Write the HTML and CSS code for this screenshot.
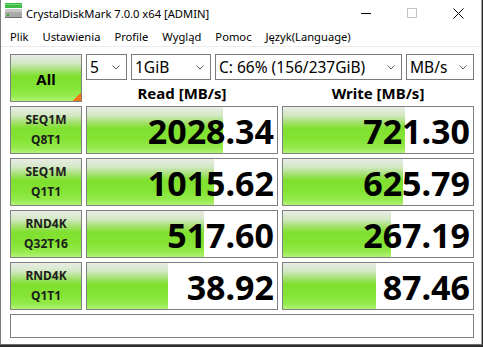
FILE: index.html
```html
<!DOCTYPE html>
<html lang="pl">
<head>
  <meta charset="UTF-8">
  <title>CrystalDiskMark 7.0.0 x64 [ADMIN]</title>
  <link rel="stylesheet" href="styles.css">
</head>
<body>

<div class="window">
  <!-- Title bar -->
  <div class="titlebar">
    <svg class="app-icon" width="18" height="16" viewBox="0 0 18 16">
      <rect x="0" y="0" width="17" height="5" fill="#3dbb48"/>
      <rect x="0" y="1" width="17" height="1" fill="#6fd870"/>
      <rect x="0" y="6" width="17" height="9" rx="1" fill="#a9a9a9"/>
      <rect x="0" y="6" width="17" height="3" fill="#c8c8c8"/>
      <rect x="0" y="14" width="17" height="1" fill="#6b6b6b"/>
      <rect x="2" y="11" width="2" height="2" fill="#2fae3b"/>
    </svg>
    <span class="title">CrystalDiskMark 7.0.0 x64 [ADMIN]</span>
    <div class="caption-buttons">
      <span class="cap-btn">
        <svg width="10" height="10" viewBox="0 0 10 10"><line x1="0" y1="5.5" x2="10" y2="5.5" stroke="#000" stroke-width="1"/></svg>
      </span>
      <span class="cap-btn">
        <svg width="10" height="10" viewBox="0 0 10 10"><rect x="0.5" y="0.5" width="9" height="9" fill="none" stroke="#c4c4c4" stroke-width="1"/></svg>
      </span>
      <span class="cap-btn">
        <svg width="11" height="11" viewBox="0 0 11 11"><path d="M0.5 0.5 L10.5 10.5 M10.5 0.5 L0.5 10.5" stroke="#000" stroke-width="1"/></svg>
      </span>
    </div>
  </div>

  <!-- Menu -->
  <div class="menubar">
    <span class="menu-item">Plik</span>
    <span class="menu-item">Ustawienia</span>
    <span class="menu-item">Profile</span>
    <span class="menu-item">Wygląd</span>
    <span class="menu-item">Pomoc</span>
    <span class="menu-item">Język(Language)</span>
  </div>

  <div class="client">
    <div class="top">
      <div class="all-btn">All</div>
      <div class="controls">
        <div class="combos">
          <div class="combo combo-count"><span>5</span><svg class="chev" width="8" height="5" viewBox="0 0 8 5"><polyline points="0.5,0.5 4,4 7.5,0.5" fill="none" stroke="#5a5a5a"/></svg></div>
          <div class="combo combo-size"><span>1GiB</span><svg class="chev" width="8" height="5" viewBox="0 0 8 5"><polyline points="0.5,0.5 4,4 7.5,0.5" fill="none" stroke="#5a5a5a"/></svg></div>
          <div class="combo combo-drive"><span>C: 66% (156/237GiB)</span><svg class="chev" width="8" height="5" viewBox="0 0 8 5"><polyline points="0.5,0.5 4,4 7.5,0.5" fill="none" stroke="#5a5a5a"/></svg></div>
          <div class="combo combo-unit"><span>MB/s</span><svg class="chev" width="8" height="5" viewBox="0 0 8 5"><polyline points="0.5,0.5 4,4 7.5,0.5" fill="none" stroke="#5a5a5a"/></svg></div>
        </div>
        <div class="headers">
          <div>Read [MB/s]</div>
          <div>Write [MB/s]</div>
        </div>
      </div>
    </div>

    <div class="row">
      <div class="test-label">SEQ1M<br>Q8T1</div>
      <div class="result"><div class="bar" style="width: 136px"></div><span class="value">2028.34</span></div>
      <div class="result"><div class="bar" style="width: 122px"></div><span class="value">721.30</span></div>
    </div>
    <div class="row">
      <div class="test-label">SEQ1M<br>Q1T1</div>
      <div class="result"><div class="bar" style="width: 127px"></div><span class="value">1015.62</span></div>
      <div class="result"><div class="bar" style="width: 120px"></div><span class="value">625.79</span></div>
    </div>
    <div class="row">
      <div class="test-label">RND4K<br>Q32T16</div>
      <div class="result"><div class="bar" style="width: 117px"></div><span class="value">517.60</span></div>
      <div class="result"><div class="bar" style="width: 108px"></div><span class="value">267.19</span></div>
    </div>
    <div class="row">
      <div class="test-label">RND4K<br>Q1T1</div>
      <div class="result"><div class="bar" style="width: 81px"></div><span class="value">38.92</span></div>
      <div class="result"><div class="bar" style="width: 93px"></div><span class="value">87.46</span></div>
    </div>

    <div class="status"></div>
  </div>
</div>

</body>
</html>
```

FILE: styles.css
```css
body {
  margin: 0;
  background: #2e2e2e;
  font-family: "Noto Sans", "DejaVu Sans", sans-serif;
  color: #000;
  overflow: hidden;
}

.window {
  width: 480px;
  height: 344px;
  background: #fff;
  border-left: 1px solid #7c7c7c;
  border-right: 1px solid #9a9a9a;
  border-bottom: 1px solid #6e6e6e;
}

/* Title bar */
.titlebar {
  height: 27px;
  display: flex;
  align-items: center;
}

.app-icon {
  margin-left: 4px;
  margin-right: 3px;
  margin-top: -5px;
}

.title {
  font-size: 11.2px;
  margin-top: -1px;
}

.caption-buttons {
  margin-left: auto;
  display: flex;
  height: 100%;
}

.cap-btn {
  width: 46px;
  display: flex;
  justify-content: center;
  align-items: center;
  margin-top: -1px;
}

/* Menu */
.menubar {
  height: 19px;
  display: flex;
  align-items: center;
  padding-left: 2px;
  font-size: 11.2px;
  border-bottom: 1px solid #ececec;
}

.menu-item {
  padding: 0 7px;
}

/* Main area */
.client {
  padding: 7px 0 0 9px;
  display: flex;
  flex-direction: column;
  gap: 4px;
}

.top {
  display: flex;
  gap: 4px;
  height: 48px;
}

.all-btn,
.test-label,
.bar {
  background: linear-gradient(to bottom, #e8ebe6 0%, #d3e8c4 18%, #a2e06c 34%, #80e02f 46%, #84e334 70%, #94ea4a 88%, #b3f27a 100%);
}

.all-btn {
  width: 72px;
  box-sizing: border-box;
  border: 1px solid #808080;
  display: flex;
  justify-content: center;
  align-items: center;
  font-size: 15px;
  font-weight: 700;
  padding-top: 2px;
  background:
    linear-gradient(135deg, transparent 50%, #f07818 50%) right bottom / 8px 8px no-repeat,
    linear-gradient(to bottom, #e8ebe6 0%, #d3e8c4 18%, #a2e06c 34%, #80e02f 46%, #84e334 70%, #94ea4a 88%, #b3f27a 100%);
}

.controls {
  width: 388px;
  display: flex;
  flex-direction: column;
}

.combos {
  display: flex;
  gap: 4px;
  height: 26px;
}

.combo {
  box-sizing: border-box;
  border: 1px solid #7a7a7a;
  display: flex;
  align-items: center;
  justify-content: space-between;
  padding: 0 6px 0 3px;
  font-size: 15.5px;
  white-space: nowrap;
}

.combo-count { width: 41px; }
.combo-size { width: 80px; }
.combo-drive { width: 187px; }
.combo-unit { width: 68px; }

.chev {
  margin-top: 1px;
}

.headers {
  display: grid;
  grid-template-columns: 192px 192px;
  gap: 4px;
  height: 22px;
  box-sizing: border-box;
  padding-top: 4px;
  line-height: 18px;
  font-size: 15px;
  font-weight: 700;
  text-align: center;
}

/* Result rows */
.row {
  display: grid;
  grid-template-columns: 72px 192px 192px;
  gap: 4px;
  height: 48px;
}

.test-label {
  box-sizing: border-box;
  border: 1px solid #808080;
  display: flex;
  align-items: center;
  justify-content: center;
  text-align: center;
  font-size: 12px;
  font-weight: 700;
  line-height: 20px;
  color: #1c1c1c;
}

.result {
  box-sizing: border-box;
  border: 1px solid #808080;
  display: grid;
  background: #fff;
}

.bar {
  grid-area: 1 / 1;
  height: 100%;
}

.value {
  grid-area: 1 / 1;
  justify-self: end;
  align-self: center;
  padding-right: 3px;
  font-size: 34px;
  font-weight: 700;
  line-height: 34px;
  margin-top: 1px;
}

.status {
  width: 464px;
  height: 24px;
  box-sizing: border-box;
  border: 1px solid #808080;
}
```
